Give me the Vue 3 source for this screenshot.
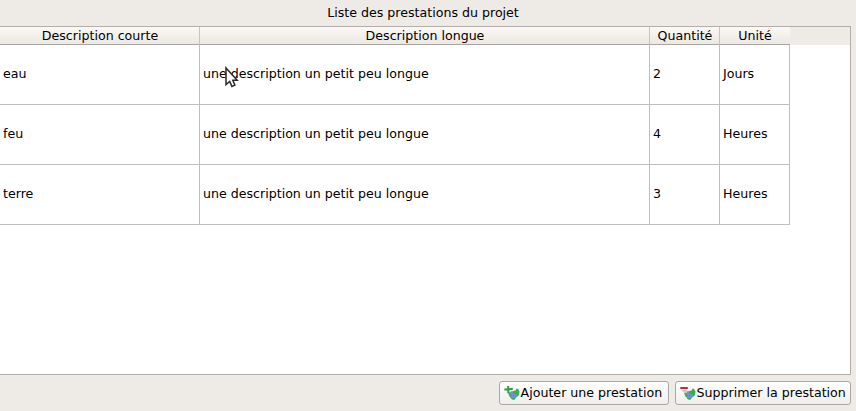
<script setup>
const columns = ['Description courte', 'Description longue', 'Quantité', 'Unité']
const rows = [
  ['eau', 'une description un petit peu longue', '2', 'Jours'],
  ['feu', 'une description un petit peu longue', '4', 'Heures'],
  ['terre', 'une description un petit peu longue', '3', 'Heures'],
]
const actions = [
  { label: 'Ajouter une prestation', kind: 'add' },
  { label: 'Supprimer la prestation', kind: 'remove' },
]
</script>

<template>
  <main class="window">
    <h1 class="title">Liste des prestations du projet</h1>
    <section class="frame">
      <div class="header">
        <div class="grid head">
          <div v-for="c in columns" :key="c" class="th"><span>{{ c }}</span></div>
        </div>
      </div>
      <div v-for="(row, i) in rows" :key="i" class="grid row">
        <div v-for="(cell, j) in row" :key="j" class="td"><span>{{ cell }}</span></div>
      </div>
    </section>
    <footer class="actions">
      <button v-for="a in actions" :key="a.kind" class="btn" :class="a.kind">
        <svg class="icon" width="16" height="16" viewBox="0 0 16 16">
          <path d="M5 7.5 8 6 13 8 13 11.5 10.2 14.6 7.3 13.8 5.2 11Z" fill="#6c93cb" />
          <path d="M9 6 11.5 5.4 12.8 3.2 14.2 4.2 15.5 6.5 15 10 13 12 12.3 9 9.4 8.4Z" fill="#35b04b" />
          <path d="M4 7.6 6.5 8.2 7.4 10.4 7 12.4 5 10.6Z" fill="#4ba763" />
          <path d="M7 12.8 9.2 13.4 12 12.6 10.2 14.8 8 14.4Z" fill="#3fa35c" />
          <path v-if="a.kind === 'add'" d="M3.2 1h2v2.3L8.8 2.7v2L5.3 5.3V8.2h-2V5.5H.3v-2h2.9Z" fill="#28a33c" />
          <template v-else>
            <path d="M1 4.8 4 7.5 7 8V4.2Z" fill="#c6cbd2" />
            <path d="M.3 2H7.8V4H.3Z" fill="#b92e37" />
          </template>
        </svg>
        <span>{{ a.label }}</span>
      </button>
    </footer>
    <svg class="cursor" width="14" height="22" viewBox="0 0 14 22">
      <path d="M1 2V18.6L4.7 15.4 6.9 20.4 9.9 19.1 7.8 14.2H12.2Z" fill="#fff" stroke="#2c2c2c" stroke-width="1.5" />
    </svg>
  </main>
</template>

<style>
body { background: #eeebe7; overflow: hidden; }
</style>

<style scoped>
.window {
  box-sizing: border-box;
  width: 856px;
  height: 411px;
  display: flex;
  flex-direction: column;
  position: relative;
  overflow: hidden;
  background: #eeebe7;
  color: #000;
  font: 12.62px/15px "DejaVu Sans", sans-serif;
}
.title {
  box-sizing: border-box;
  margin: 0;
  padding: 5px 10px 0 0;
  height: 26px;
  font-size: inherit;
  font-weight: normal;
  text-align: center;
}
.frame {
  box-sizing: border-box;
  height: 349px;
  width: 851px;
  border: 1px solid #b2aeab;
  border-left: 0;
  background: #fff;
}
.header { background: #eeebe7; }
.grid {
  display: grid;
  grid-template-columns: 200px 450px 70px 70px;
  width: 790px;
}
.th {
  box-sizing: border-box;
  height: 18px;
  padding: 1px 0 0 1px;
  text-align: center;
  background: linear-gradient(#fbf8f5, #ebe8e4);
  border-right: 1px solid #c7c3c0;
  border-bottom: 1px solid #a9a5a2;
}
.th:last-child { border-right: 0; padding-left: 0; }
.td {
  box-sizing: border-box;
  height: 60px;
  display: flex;
  align-items: center;
  padding: 0 3px 2px;
  border-right: 1px solid #c1bfbd;
  border-bottom: 1px solid #c1bfbd;
}
.actions {
  display: flex;
  justify-content: flex-end;
  gap: 6px;
  padding: 6px 5px 0 0;
}
.btn {
  box-sizing: border-box;
  display: flex;
  align-items: center;
  width: 170px;
  height: 24px;
  margin: 0;
  padding: 0 0 0 4px;
  border: 1px solid #aaa7a4;
  border-radius: 3px;
  background: linear-gradient(#fff, #f0eeeb);
  font: inherit;
  color: inherit;
  white-space: nowrap;
}
.btn span { padding: 0 0 1px 0.6px; }
.remove { width: 176px; }
.icon { flex: none; }
.cursor { position: absolute; left: 225px; top: 66px; }
</style>
